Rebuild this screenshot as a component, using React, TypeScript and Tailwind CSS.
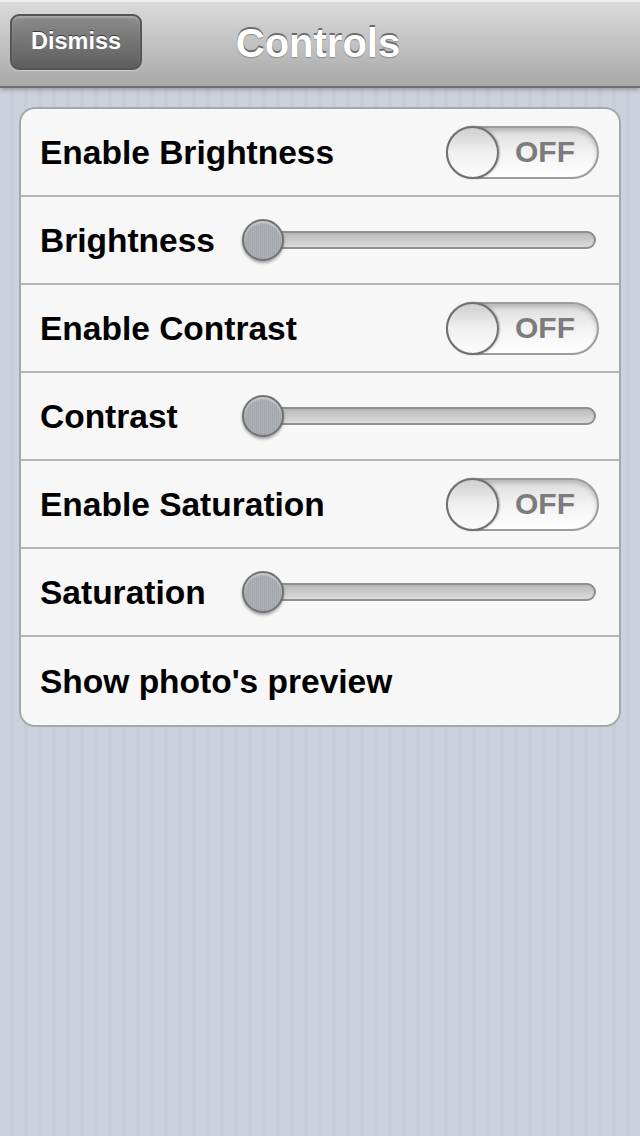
import React from "react";

const font = { fontFamily: '"Liberation Sans", Arial, sans-serif' };

const Toggle = () => (
  <div className="relative h-[53px] w-[153px] shrink-0 rounded-full border-2 border-[#9c9c9c] bg-gradient-to-b from-[#dcdcdc] via-[#f2f2f2] to-[#ffffff] shadow-[inset_0_3px_4px_rgba(0,0,0,0.18)]">
    <span className="absolute right-[22px] top-1/2 -translate-y-1/2 text-[30px] font-bold leading-none text-[#7c7c7c]">
      OFF
    </span>
    <div className="absolute -left-[2px] -top-[2px] h-[53px] w-[53px] rounded-full border-2 border-[#6f6f6f] bg-gradient-to-b from-[#cfcfcf] via-[#f0f0f0] to-[#fbfbfb] shadow-[1px_0_2px_rgba(0,0,0,0.25)]" />
  </div>
);

const Slider = () => (
  <div className="relative flex h-[44px] flex-1 items-center">
    <div className="ml-[4px] h-[18px] flex-1 rounded-full border-2 border-[#8e8e8e] bg-gradient-to-b from-[#b9b9b9] to-[#dcdcdc] shadow-[0_1px_0_#ffffff]" />
    <div className="absolute left-0 top-1/2 h-[42px] w-[42px] -translate-y-1/2 rounded-full border-2 border-[#707274] bg-[#a8abb0] bg-[repeating-linear-gradient(90deg,#a4a7ac_0px,#a4a7ac_1px,#adb0b5_1px,#adb0b5_2px)] shadow-[0_2px_3px_rgba(0,0,0,0.35),inset_0_2px_2px_rgba(255,255,255,0.4)]" />
  </div>
);

const rows: { label: string; kind: "toggle" | "slider" | "none" }[] = [
  { label: "Enable Brightness", kind: "toggle" },
  { label: "Brightness", kind: "slider" },
  { label: "Enable Contrast", kind: "toggle" },
  { label: "Contrast", kind: "slider" },
  { label: "Enable Saturation", kind: "toggle" },
  { label: "Saturation", kind: "slider" },
  { label: "Show photo's preview", kind: "none" },
];

export default function App() {
  return (
    <div
      style={font}
      className="min-h-[1136px] w-[640px] bg-[#cbd1db] bg-[repeating-linear-gradient(90deg,#ccd2dc_0px,#ccd2dc_10px,#c7cdd8_10px,#c7cdd8_14px)]"
    >
      <div className="relative flex h-[88px] items-center justify-center border-b-2 border-[#6f6f6f] bg-gradient-to-b from-[#dcdcdc] to-[#a9a9a9] shadow-[0_2px_4px_rgba(0,0,0,0.25),inset_0_2px_0_rgba(255,255,255,0.5)]">
        <button className="absolute left-[10px] top-[14px] h-[56px] w-[132px] rounded-[9px] border-2 border-[#555555] bg-gradient-to-b from-[#8c8c8c] to-[#5e5e5e] text-[23.5px] font-bold text-white shadow-[inset_0_2px_2px_rgba(255,255,255,0.25),0_1px_0_rgba(255,255,255,0.4)] [text-shadow:0_-1px_0_#3a3a3a]">
          Dismiss
        </button>
        <h1 className="pr-[4px] text-[40px] font-bold text-white [text-shadow:0_-2px_0_#6c6c6c,0_1px_1px_#8a8a8a]">
          Controls
        </h1>
      </div>

      <div className="mx-[19px] mt-[19px] overflow-hidden rounded-[16px] border-2 border-[#a6a7a9] bg-[#f7f7f7]">
        {rows.map((r, i) => (
          <div
            key={r.label}
            className={`flex h-[88px] items-center pl-[19px] ${
              i < rows.length - 1 ? "border-b-2 border-[#b4b4b4]" : ""
            }`}
          >
            {r.kind === "slider" ? (
              <>
                <span className="w-[202px] shrink-0 pt-[2px] text-[33.5px] font-bold text-black">
                  {r.label}
                </span>
                <div className="mr-[23px] flex flex-1">
                  <Slider />
                </div>
              </>
            ) : (
              <>
                <span className="flex-1 pt-[2px] text-[33.5px] font-bold text-black">
                  {r.label}
                </span>
                {r.kind === "toggle" && (
                  <div className="mr-[20px]">
                    <Toggle />
                  </div>
                )}
              </>
            )}
          </div>
        ))}
      </div>
    </div>
  );
}
